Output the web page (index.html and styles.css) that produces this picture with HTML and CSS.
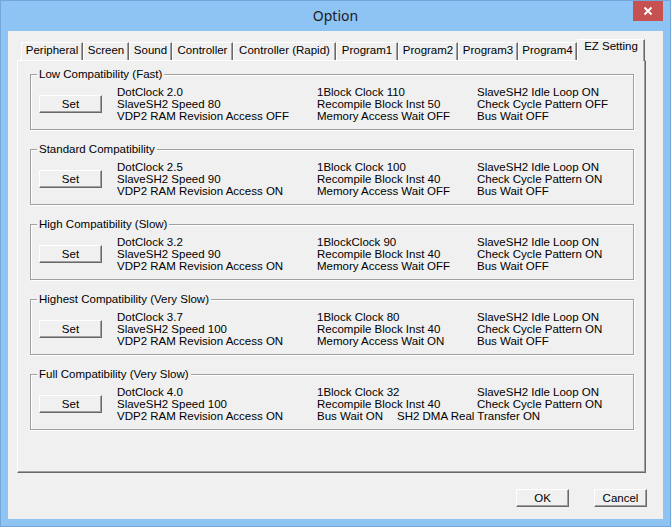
FILE: index.html
```html
<!DOCTYPE html>
<html>
<head>
<meta charset="utf-8">
<title>Option</title>
<link rel="stylesheet" href="styles.css">
</head>
<body>
<div class="window">
  <div class="titlebar">
    <div class="spacer"></div>
    <div class="title">Option</div>
    <div class="close">
      <svg width="30" height="20" viewBox="0 0 30 20"><path d="M11.5 6.5 L18.5 13.5 M18.5 6.5 L11.5 13.5" stroke="#fff" stroke-width="2" fill="none"/></svg>
    </div>
  </div>
  <div class="client">
    <div class="tabs">
      <div class="tab t1">Peripheral</div>
      <div class="tab t2">Screen</div>
      <div class="tab t3">Sound</div>
      <div class="tab t4">Controller</div>
      <div class="tab t5">Controller (Rapid)</div>
      <div class="tab t6">Program1</div>
      <div class="tab t7">Program2</div>
      <div class="tab t8">Program3</div>
      <div class="tab t9">Program4</div>
      <div class="tab selected">EZ Setting</div>
    </div>
    <div class="pane">
      <div class="group">
        <div class="legend">Low Compatibility (Fast)</div>
        <button class="btn set">Set</button>
        <div class="col c1"><span>DotClock 2.0</span><span>SlaveSH2 Speed 80</span><span>VDP2 RAM Revision Access OFF</span></div>
        <div class="col c2"><span>1Block Clock 110</span><span>Recompile Block Inst 50</span><span>Memory Access Wait OFF</span></div>
        <div class="col c3"><span>SlaveSH2 Idle Loop ON</span><span>Check Cycle Pattern OFF</span><span>Bus Wait OFF</span></div>
      </div>
      <div class="group">
        <div class="legend">Standard Compatibility</div>
        <button class="btn set">Set</button>
        <div class="col c1"><span>DotClock 2.5</span><span>SlaveSH2 Speed 90</span><span>VDP2 RAM Revision Access ON</span></div>
        <div class="col c2"><span>1Block Clock 100</span><span>Recompile Block Inst 40</span><span>Memory Access Wait OFF</span></div>
        <div class="col c3"><span>SlaveSH2 Idle Loop ON</span><span>Check Cycle Pattern ON</span><span>Bus Wait OFF</span></div>
      </div>
      <div class="group">
        <div class="legend">High Compatibility (Slow)</div>
        <button class="btn set">Set</button>
        <div class="col c1"><span>DotClock 3.2</span><span>SlaveSH2 Speed 90</span><span>VDP2 RAM Revision Access ON</span></div>
        <div class="col c2"><span>1BlockClock 90</span><span>Recompile Block Inst 40</span><span>Memory Access Wait OFF</span></div>
        <div class="col c3"><span>SlaveSH2 Idle Loop ON</span><span>Check Cycle Pattern ON</span><span>Bus Wait OFF</span></div>
      </div>
      <div class="group">
        <div class="legend">Highest Compatibility (Very Slow)</div>
        <button class="btn set">Set</button>
        <div class="col c1"><span>DotClock 3.7</span><span>SlaveSH2 Speed 100</span><span>VDP2 RAM Revision Access ON</span></div>
        <div class="col c2"><span>1Block Clock 80</span><span>Recompile Block Inst 40</span><span>Memory Access Wait ON</span></div>
        <div class="col c3"><span>SlaveSH2 Idle Loop ON</span><span>Check Cycle Pattern ON</span><span>Bus Wait OFF</span></div>
      </div>
      <div class="group">
        <div class="legend">Full Compatibility (Very Slow)</div>
        <button class="btn set">Set</button>
        <div class="col c1"><span>DotClock 4.0</span><span>SlaveSH2 Speed 100</span><span>VDP2 RAM Revision Access ON</span></div>
        <div class="col c2"><span>1Block Clock 32</span><span>Recompile Block Inst 40</span><span><span class="bw">Bus Wait ON</span>SH2 DMA Real Transfer ON</span></div>
        <div class="col c3"><span>SlaveSH2 Idle Loop ON</span><span>Check Cycle Pattern ON</span><span></span></div>
      </div>
    </div>
    <div class="footer">
      <button class="btn ok">OK</button>
      <button class="btn cancel">Cancel</button>
    </div>
  </div>
</div>
</body>
</html>
```
FILE: styles.css
```css
html, body {
  margin: 0;
  padding: 0;
  background: #8ec4f4;
}
.window {
  width: 671px;
  height: 527px;
  box-sizing: border-box;
  border: 1px solid #74a6da;
  background: #8ec4f4;
  display: flex;
  flex-direction: column;
  font-family: "Liberation Sans", Arial, sans-serif;
  font-size: 11.5px;
  color: #000;
}
.titlebar {
  height: 30px;
  display: grid;
  grid-template-columns: 1fr auto 1fr;
  align-items: start;
}
.title {
  font-family: "Noto Sans", "Open Sans", sans-serif;
  font-size: 14px;
  line-height: 30px;
  color: #1a1a1a;
}
.close {
  justify-self: end;
  margin-right: 7px;
  width: 30px;
  height: 20px;
  background: #c75050;
}
.close svg {
  display: block;
}
.client {
  flex: 1;
  margin: 0 7px 7px 7px;
  background: #f0f0f0;
  padding: 8px 0 0 9px;
  display: flex;
  flex-direction: column;
}
.tabs {
  display: flex;
  align-items: flex-end;
  height: 21px;
  margin-left: 4px;
  position: relative;
  z-index: 1;
}
.tab {
  box-sizing: border-box;
  height: 18px;
  border-top: 1px solid #fff;
  border-left: 1px solid #fff;
  border-right: 1px solid #696969;
  box-shadow: inset -1px 0 0 #a0a0a0;
  text-align: center;
  line-height: 14px;
  white-space: nowrap;
  background: #f0f0f0;
}
.t1 { width: 62px; }
.t2 { width: 46px; }
.t3 { width: 43px; }
.t4 { width: 61px; }
.t5 { width: 103px; }
.t6 { width: 62px; }
.t7 { width: 60px; }
.t8 { width: 60px; }
.t9 { width: 59px; }
.tab.selected {
  width: 68px;
  height: 22px;
  margin-bottom: -1px;
  line-height: 13px;
}
.pane {
  box-sizing: border-box;
  width: 629px;
  height: 413px;
  border-top: 1px solid #fff;
  border-left: 1px solid #fff;
  border-right: 1px solid #696969;
  border-bottom: 1px solid #696969;
  box-shadow: inset -1px -1px 0 #a0a0a0;
  padding: 13px 0 0 12px;
}
.group {
  position: relative;
  box-sizing: border-box;
  width: 604px;
  height: 56px;
  border: 1px solid #a0a0a0;
  box-shadow: inset 1px 1px 0 #fff, 1px 1px 0 #fff;
  margin-bottom: 19px;
  padding: 11px 0 0 8px;
  display: flex;
  align-items: flex-start;
  line-height: 12px;
}
.legend {
  position: absolute;
  top: -7px;
  left: 6px;
  padding: 0 2px;
  background: #f0f0f0;
  line-height: 12px;
  white-space: nowrap;
}
.btn {
  box-sizing: border-box;
  height: 18px;
  padding: 0;
  margin: 0;
  background: #f0f0f0;
  border-top: 1px solid #fff;
  border-left: 1px solid #fff;
  border-right: 1px solid #696969;
  border-bottom: 1px solid #696969;
  box-shadow: inset -1px -1px 0 #a0a0a0;
  font-family: "Liberation Sans", Arial, sans-serif;
  font-size: 11.5px;
  line-height: 14px;
  color: #000;
  text-align: center;
}
.set {
  width: 63px;
  margin-top: 9px;
  margin-right: 15px;
}
.col {
  display: flex;
  flex-direction: column;
  white-space: nowrap;
}
.col span {
  height: 12px;
}
.c1 { width: 200px; }
.c2 { width: 160px; }
.c3 { flex: 1; }
.bw {
  display: inline-block;
  width: 80px;
}
.footer {
  margin-top: 16px;
  padding-right: 16px;
  display: flex;
  justify-content: flex-end;
  gap: 25px;
}
.ok, .cancel {
  width: 53px;
}
```
